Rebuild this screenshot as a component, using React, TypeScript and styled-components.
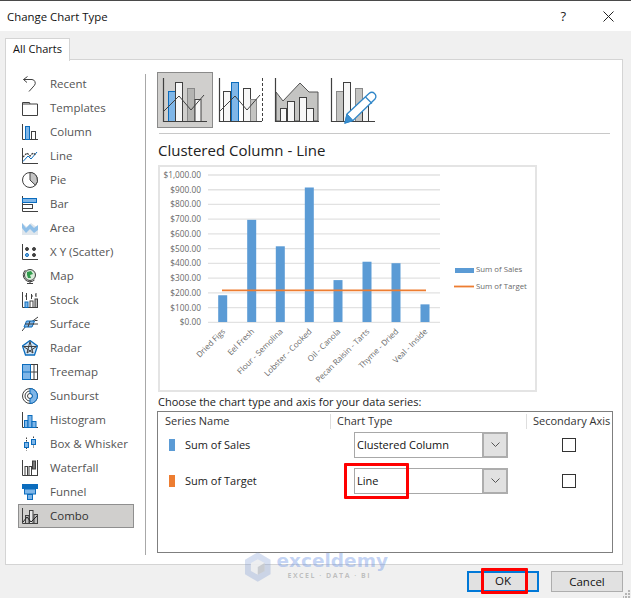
import React from "react";
import styled, { createGlobalStyle } from "styled-components";

const Global = createGlobalStyle`
  html, body { margin: 0; padding: 0; background: #f0f0f0; }
  body { font-family: "Open Sans", "Noto Sans", "Liberation Sans", sans-serif; }
  * { box-sizing: border-box; }
`;
const Dialog = styled.div`
  position: relative; width: 631px; height: 598px; overflow: hidden; background: #f0f0f0;
  display: flex; flex-direction: column; font-size: 11px; color: #1a1a1a;
`;
const TitleBar = styled.div`
  height: 31px; flex: none; background: #fff; border-top: 1px solid #4a4a4a;
  display: flex; align-items: center; padding: 0 17px 0 7px; font-size: 11.4px; color: #111;
`;
const Title = styled.div`flex: 1;`;
const Help = styled.div`margin-right: 37px; font-size: 13px; color: #222;`;
const TabStrip = styled.div`
  height: 29px; flex: none; padding: 7px 0 0 5px; display: flex;
`;
const Tab = styled.div`
  width: 65px; height: 23px; background: #fff; border: 1px solid #d4d4d4; border-bottom: none;
  display: flex; align-items: center; justify-content: center; position: relative; z-index: 1;
  font-size: 11px; color: #111; padding-bottom: 3px;
`;
const Panel = styled.div`
  margin: -1px 8px 0 5px; height: 506px; flex: none; background: #fff; border: 1px solid #d4d4d4;
  display: flex; padding: 12px 12px 9px 12px;
`;
const Sidebar = styled.div`
  width: 128px; flex: none; border-right: 1px solid #a8a8a8; padding-right: 11px; margin-top: 2px;
  display: flex; flex-direction: column;
`;
const SideList = styled.div`margin-top: -2px; display: flex; flex-direction: column;`;
const SideItem = styled.div<{ $active?: boolean }>`
  height: 24px; display: flex; align-items: center; gap: 12px; padding-left: 3px; flex: none;
  font-size: 11.5px;
  color: ${(p) => (p.$active ? "#333" : "#555")};
  background: ${(p) => (p.$active ? "#d0cfcd" : "transparent")};
  border: 1px solid ${(p) => (p.$active ? "#8f8f8f" : "transparent")};
  svg { flex: none; }
  span { position: relative; top: -1px; }
`;
const Main = styled.div`
  flex: 1; padding-left: 11px; display: flex; flex-direction: column; min-width: 0;
`;
const TypeRow = styled.div`display: flex; height: 56px; flex: none;`;
const TypeButton = styled.div<{ $active?: boolean }>`
  width: 56px; height: 56px; flex: none;
  background: ${(p) => (p.$active ? "#d0cfcd" : "transparent")};
  border: 1px solid ${(p) => (p.$active ? "#8a8a8a" : "transparent")};
  svg { display: block; margin: -1px; }
`;
const Rule = styled.div`height: 1px; background: #c8c8c8; margin: 5px 0 0 2px; flex: none;`;
const ChartTitle = styled.div`
  font-size: 15px; line-height: 20px; margin: 6px 0 5px 1px; color: #222; flex: none;
`;
const ChartBox = styled.div`
  width: 379px; height: 227px; margin-left: 1px; border: 2px solid #e4e4e4; flex: none; background: #fff;
  svg { display: block; margin: -2px; }
`;
const ChooseLabel = styled.div`
  font-size: 11px; line-height: 16px; height: 19px; padding-top: 2px; margin-left: 1px; color: #222; flex: none;
`;
const SeriesTable = styled.div`
  width: 456px; height: 142px; border: 1px solid #7f7f7f; flex: none; display: flex; flex-direction: column;
`;
const HeaderRow = styled.div`
  display: grid; grid-template-columns: 172px 196px 1fr; height: 19px;
`;
const HeaderCell = styled.div<{ $first?: boolean }>`
  padding-left: ${(p) => (p.$first ? "7px" : "6px")}; padding-bottom: 2px;
  height: 15px; margin-top: 2px; white-space: nowrap; color: #333;
  border-left: ${(p) => (p.$first ? "none" : "1px solid #dedede")};
  display: flex; align-items: center;
`;
const SeriesRow = styled.div`
  display: grid; grid-template-columns: 196px 177px 1fr; height: 26px; align-items: center;
  margin-top: 1px; flex: none;
  & + & { margin-top: 10px; }
`;
const SeriesName = styled.div`display: flex; align-items: center; gap: 10px; padding-left: 11px; color: #222;`;
const NameText = styled.span`position: relative; top: -1px;`;
const Swatch = styled.div<{ $color: string }>`
  width: 6px; height: 12px; background: ${(p) => p.$color}; flex: none;
`;
const Select = styled.div`
  position: relative; width: 154px; height: 26px; border: 1px solid #a8a8a8; display: flex; background: #fff;
`;
const SelectText = styled.div`flex: 1; padding-left: 2px; line-height: 24px; color: #111;`;
const SelectBtn = styled.div`
  width: 26px; margin: -1px -1px -1px 0; background: #e1e1e1; border: 2px solid #adadad;
  display: flex; align-items: center; justify-content: center;
`;
const CheckCell = styled.div`display: flex; justify-content: center; padding-right: 6px;`;
const Check = styled.div`width: 14px; height: 14px; border: 1px solid #333; background: #fff;`;
const RedBox = styled.div`
  position: absolute; left: -11px; top: -6px; width: 65px; height: 36px; border: 3px solid #f00; border-radius: 1px;
`;
const Footer = styled.div`
  flex: 1; display: flex; justify-content: flex-end; gap: 12px; padding: 6px 8px 0 0;
`;
const Button = styled.div<{ $primary?: boolean }>`
  position: relative; width: 72px; height: 21px; background: #e1e1e1;
  border: ${(p) => (p.$primary ? "2px solid #0078d7" : "1px solid #adadad")};
  display: flex; align-items: center; justify-content: center; color: #111; font-size: 11.5px;
  padding-bottom: ${(p) => (p.$primary ? "2px" : "1px")};
`;
const RedOk = styled.div`
  position: absolute; left: 12px; top: -5px; width: 47px; height: 26px; border: 3px solid #f00; border-radius: 1px;
`;
const Grip = styled.svg`position: absolute; right: 0; bottom: 0;`;
const Watermark = styled.div`
  position: absolute; left: 244px; top: 551px; width: 144px; height: 32px; display: flex; gap: 5px; pointer-events: none;
`;
const WmText = styled.div`display: flex; flex-direction: column;`;
const WmName = styled.div`
  font-family: "DejaVu Sans", sans-serif; font-weight: 700; font-size: 18.5px; line-height: 20px;
  color: rgba(110, 150, 230, 0.42);
`;
const WmSub = styled.div`
  font-family: "Open Sans", sans-serif; font-weight: 700; font-size: 7px; line-height: 10px; letter-spacing: 1.5px;
  margin-left: 11px; color: rgba(120, 120, 120, 0.42); white-space: nowrap;
`;

const S = "#404040";
const B = "#0b6cbd";
const L = "#7fb6e8";
const base = { width: 16, height: 16, viewBox: "0 0 16 16", fill: "none" as const, stroke: S, strokeWidth: 1 };

const icons: Record<string, React.ReactNode> = {
  Recent: <svg {...base}><path d="M5.5.5 1.500 3.500l3.500 3M1.500 3.500h8.500a3.600 3.600 0 0 1 2.500 5.800L7 15.500" /></svg>,
  Templates: <svg {...base}><path d="M.5 15.500v-13h7l.5 1.500h7.500v11.500zM.5 4h7.500" /></svg>,
  Column: <svg {...base}><path d="M.5 0v15.500H16" /><rect x="3.500" y="2.500" width="4" height="13" fill={L} stroke={B} /><rect x="9.500" y="7.500" width="4" height="8" /></svg>,
  Line: <svg {...base}><path d="M.5 0v15.500H16" /><path d="M1 13.500 6 8l3 3 6-7" stroke={B} /><path d="M1 9l4-4 3 3 3-3 3 2" strokeDasharray="2 1" strokeWidth="1.300" /></svg>,
  Pie: <svg {...base}><circle cx="8" cy="8" r="7.500" /><path d="M8 8V.5A7.500 7.500 0 0 1 13.400 13.200z" fill="#c4c4c4" /></svg>,
  Bar: <svg {...base}><path d="M.5 0v15.500H16" /><rect x=".5" y="2.500" width="14" height="4" fill={L} stroke={B} /><rect x=".5" y="8.500" width="10" height="4" /></svg>,
  Area: <svg {...base} stroke="none"><path d="M0 3l5 4 4-4 7 5v7H0z" fill="#dfe6ec" /><path d="M0 3l4 5 4-4 4 4 4-3v5l-4 3-4-4-4 4-4-5z" fill="#8fbfe8" /></svg>,
  Scatter: <svg {...base}><path d="M.5 0v15.500H16" /><circle cx="5" cy="5" r="1.500" fill={S} /><circle cx="12" cy="5" r="1.500" fill={S} /><circle cx="5" cy="11" r="1.500" fill={L} stroke={B} /><circle cx="12" cy="11" r="1.500" fill={S} /></svg>,
  Map: <svg {...base}><circle cx="8" cy="7" r="5.500" fill="#d9ecd9" /><path d="M5 4l4-1 2 3-3 1 1 3-3 0-1-3z" fill="#2e9a4a" stroke="none" /><path d="M3.500 2A6.500 6.500 0 0 0 12.500 12M8 13.500V15M5 15.500h6" /></svg>,
  Stock: <svg {...base}><path d="M.5 0v15.500H16" /><rect x="3" y="10" width="3" height="5.500" fill={L} stroke={B} /><rect x="8" y="9" width="3" height="6.500" /><rect x="13" y="7" width="2.500" height="8.500" fill="#bbb" /><path d="M4.500 1v7M9.500 2v5M14 1v4" /><path d="M3 4h1.500M9.500 4h1.500M13 3h1" /></svg>,
  Surface: <svg {...base}><path d="M0 15l4-5 12-9" /><path d="M4.500 5h8L10 11H2z" fill={L} stroke={B} /><path d="M8 5 6 11M3 8h9M11 8h5M12.500 4.500h3" /></svg>,
  Radar: <svg {...base}><path d="M8 .5 15.500 6 12.500 15H3.500L.5 6z" fill="#cfe4f6" stroke={B} strokeWidth="1.300" /><path d="M8 1.500 11 13 1.500 6.500H14.500L5 13z" /></svg>,
  Treemap: <svg {...base}><rect x=".5" y=".5" width="15" height="15" /><rect x=".5" y=".5" width="8" height="15" fill={L} stroke={B} /><path d="M.5 8h8" stroke={B} /><path d="M12 .5V15.500M8.500 8h7" /></svg>,
  Sunburst: <svg {...base}><circle cx="8" cy="8" r="7.500" /><circle cx="8" cy="8" r="5" /><circle cx="8" cy="8" r="2.500" /><path d="M8 .5A7.500 7.500 0 0 1 8 15.500V10.500A2.500 2.500 0 0 0 8 5.500z" fill={L} stroke={B} /></svg>,
  Histogram: <svg {...base}><path d="M.5 0v15.500H16" /><rect x="2.500" y="8.500" width="3.500" height="7" fill={L} stroke={B} /><rect x="6" y="3.500" width="4" height="12" fill={L} stroke={B} /><rect x="10" y="9.500" width="4" height="6" fill={L} stroke={B} /></svg>,
  Box: <svg {...base}><path d="M4.500 1.500v13M11.500 .5v11" strokeDasharray="1.500 1" /><rect x="2.500" y="6.500" width="4" height="5" fill={L} stroke={B} /><rect x="9.500" y="3.500" width="4" height="5" fill={L} stroke={B} /></svg>,
  Waterfall: <svg {...base}><path d="M.5 0v15.500H16M15.500 0v15" /><rect x="3" y="6.500" width="2.500" height="9" /><rect x="7" y="6.500" width="2.500" height="9" /><rect x="10.500" y="1" width="3" height="8" fill="#777" /></svg>,
  Funnel: <svg {...base} stroke={B}><rect x=".5" y=".5" width="15" height="4" fill={B} /><rect x="2.500" y="5" width="11" height="5" fill={L} /><rect x="5.500" y="10.500" width="5" height="5" fill={L} /></svg>,
  Combo: <svg {...base}><path d="M.5 0v15.500H16" /><rect x="3.500" y="7.500" width="3.500" height="8" fill="#bdbdbd" /><rect x="7.500" y="2.500" width="3.500" height="13" fill="#e8e8e8" /><rect x="12" y="6.500" width="3.500" height="9" fill="#bdbdbd" /><path d="M1 14l4-5 4 5 6-6" stroke="#222" /></svg>,
};

const side: [string, string][] = [
  ["Recent", "Recent"], ["Templates", "Templates"], ["Column", "Column"], ["Line", "Line"], ["Pie", "Pie"],
  ["Bar", "Bar"], ["Area", "Area"], ["Scatter", "X Y (Scatter)"], ["Map", "Map"], ["Stock", "Stock"],
  ["Surface", "Surface"], ["Radar", "Radar"], ["Treemap", "Treemap"], ["Sunburst", "Sunburst"], ["Histogram", "Histogram"],
  ["Box", "Box & Whisker"], ["Waterfall", "Waterfall"], ["Funnel", "Funnel"], ["Combo", "Combo"],
];

const TypeSvg = ({ x, children }: { x: number; children: React.ReactNode }) => (
  <svg width="56" height="56" viewBox={`${x} 72 56 56`} fill="none" stroke={S} strokeWidth="1">{children}</svg>
);
const Gray = "#c4c4c2";
const White = "#f7f7f7";

const ChartType1 = () => (
  <TypeSvg x={157}>
    <rect x="168.500" y="91.500" width="7" height="30" fill={L} stroke={B} />
    <rect x="175.500" y="82.500" width="7" height="39" fill={White} />
    <rect x="187.500" y="88.500" width="7" height="33" fill="#b4b4b2" stroke="#888" />
    <rect x="195" y="99.500" width="6" height="22" fill={White} />
    <path d="M163.500 78v43.500H207" strokeWidth="1.200" />
    <path d="M164 111l15-15 12 14 13-15" />
  </TypeSvg>
);
const ChartType2 = () => (
  <TypeSvg x={213}>
    <rect x="223.500" y="91.500" width="7" height="30" fill={White} />
    <rect x="231.500" y="82.500" width="7" height="39" fill={L} stroke={B} />
    <rect x="243.500" y="88.500" width="7" height="33" fill={White} />
    <rect x="250.500" y="99.500" width="6" height="22" fill={Gray} stroke="#888" />
    <path d="M219.500 78v43.500H262" strokeWidth="1.200" />
    <path d="M262.500 78v43" strokeDasharray="3 2" />
    <path d="M220 111l15-15 12 14 13-15" />
  </TypeSvg>
);
const ChartType3 = () => (
  <TypeSvg x={269}>
    <path d="M276 92l7 9 17-18 9 9h9v29h-42z" fill={Gray} stroke="#555" />
    <rect x="280.500" y="108.500" width="6" height="13" fill={White} />
    <rect x="287.500" y="101.500" width="7" height="20" fill={White} />
    <rect x="299.500" y="97.500" width="7" height="24" fill={White} />
    <rect x="306.500" y="108.500" width="7" height="13" fill={White} />
    <path d="M275.500 78v43.500H319" strokeWidth="1.200" />
  </TypeSvg>
);
const ChartType4 = () => (
  <TypeSvg x={325}>
    <rect x="336.500" y="91.500" width="7" height="30" fill={Gray} stroke="#888" />
    <rect x="343.500" y="82.500" width="7" height="39" fill={White} />
    <rect x="355.500" y="88.500" width="7" height="33" fill={Gray} stroke="#888" />
    <rect x="362.500" y="100.500" width="6" height="21" fill={White} />
    <path d="M331.500 78v43.500H375" strokeWidth="1.200" />
    <path d="M347 114 369 93.500q3-2.500 5.500 0t.5 5.500L353 120.500l-8 2.500z" fill="#fff" stroke="#2f86c8" strokeWidth="1.300" />
    <path d="M347 114l6 6.500-8 2.500z" fill="#3a8fd0" stroke="#2f86c8" />
    <path d="M365.500 97l6.500 6.500" stroke="#2f86c8" strokeWidth="1.300" />
  </TypeSvg>
);

const yLabels = ["$1,000.00", "$900.00", "$800.00", "$700.00", "$600.00", "$500.00", "$400.00", "$300.00", "$200.00", "$100.00", "$0.00"];
const data: [string, number, number][] = [
  ["Dried Figs", 222.7, 182], ["Eel Fresh", 251.7, 695], ["Flour - Semolina", 280.3, 515], ["Lobster - Cooked", 309.3, 915],
  ["Oil - Canola", 338, 285], ["Pecan Raisin - Tarts", 367, 410], ["Thyme - Dried", 396, 400], ["Veal - Inside", 425, 120],
];
const ct = { fontFamily: "'Open Sans', sans-serif", fontSize: 8, fill: "#6a6a6a", stroke: "none" };

const Chart = () => (
  <svg width="379" height="227" viewBox="158 165 379 227">
    {yLabels.map((t, i) => {
      const y = 175 + i * 14.73;
      return (
        <g key={t}>
          <line x1="208" x2="440" y1={y} y2={y} stroke="#e2e2e2" strokeWidth="1.300" />
          <text x="201" y={y + 3} textAnchor="end" {...ct} fontSize="8.300">{t}</text>
        </g>
      );
    })}
    {data.map(([name, cx, v]) => (
      <g key={name}>
        <rect x={cx - 4.5} y={322 - v * 0.147} width="9" height={v * 0.147} fill="#5b9bd5" />
        <text transform={`translate(${cx + 3} 332) rotate(-45)`} textAnchor="end" {...ct}>{name}</text>
      </g>
    ))}
    <line x1="222" x2="426" y1="290.300" y2="290.300" stroke="#ed7d31" strokeWidth="1.800" />
    <rect x="455" y="268" width="19" height="5" fill="#5b9bd5" />
    <text x="476" y="272" {...ct} fontSize="7.800">Sum of Sales</text>
    <line x1="454" x2="474" y1="286.500" y2="286.500" stroke="#ed7d31" strokeWidth="1.800" />
    <text x="476" y="289" {...ct} fontSize="7.800">Sum of Target</text>
  </svg>
);

const Chevron = () => (
  <svg width="9" height="6" viewBox="0 0 9 6" fill="none" stroke="#555" strokeWidth="1"><path d="M.5 .5l4 4 4-4" /></svg>
);

export default function App() {
  return (
    <Dialog>
      <Global />
      <TitleBar>
        <Title>Change Chart Type</Title>
        <Help>?</Help>
        <svg width="11" height="11" viewBox="0 0 11 11" stroke="#222" strokeWidth="1"><path d="M.5 .5l10 10M10.500 .5l-10 10" /></svg>
      </TitleBar>
      <TabStrip><Tab>All Charts</Tab></TabStrip>
      <Panel>
        <Sidebar>
          <SideList>
            {side.map(([k, label]) => (
              <SideItem key={k} $active={k === "Combo"}>{icons[k]}<span>{label}</span></SideItem>
            ))}
          </SideList>
        </Sidebar>
        <Main>
          <TypeRow>
            <TypeButton $active><ChartType1 /></TypeButton>
            <TypeButton><ChartType2 /></TypeButton>
            <TypeButton><ChartType3 /></TypeButton>
            <TypeButton><ChartType4 /></TypeButton>
          </TypeRow>
          <Rule />
          <ChartTitle>Clustered Column - Line</ChartTitle>
          <ChartBox><Chart /></ChartBox>
          <ChooseLabel>Choose the chart type and axis for your data series:</ChooseLabel>
          <SeriesTable>
            <HeaderRow>
              <HeaderCell $first>Series Name</HeaderCell>
              <HeaderCell>Chart Type</HeaderCell>
              <HeaderCell>Secondary Axis</HeaderCell>
            </HeaderRow>
            <SeriesRow>
              <SeriesName><Swatch $color="#5b9bd5" /><NameText>Sum of Sales</NameText></SeriesName>
              <Select><SelectText>Clustered Column</SelectText><SelectBtn><Chevron /></SelectBtn></Select>
              <CheckCell><Check /></CheckCell>
            </SeriesRow>
            <SeriesRow>
              <SeriesName><Swatch $color="#ed7d31" /><NameText>Sum of Target</NameText></SeriesName>
              <Select>
                <SelectText>Line</SelectText><SelectBtn><Chevron /></SelectBtn>
                <RedBox />
              </Select>
              <CheckCell><Check /></CheckCell>
            </SeriesRow>
          </SeriesTable>
        </Main>
      </Panel>
      <Footer>
        <Button $primary>OK<RedOk /></Button>
        <Button>Cancel</Button>
      </Footer>
      <Watermark>
        <svg width="28" height="32" viewBox="0 0 28 32">
          <path d="M14 1 27 8.500v15L14 31 1 23.500v-15z" fill="rgba(120,150,210,.3)" />
          <path d="M14 8 21 12v8l-7 4-7-4v-8z" fill="rgba(240,240,240,.9)" />
          <path d="M14 16l7-4v8l-7 4z" fill="rgba(120,130,140,.3)" />
        </svg>
        <WmText>
          <WmName>exceldemy</WmName>
          <WmSub>EXCEL · DATA · BI</WmSub>
        </WmText>
      </Watermark>
      <Grip width="8" height="8" viewBox="0 0 8 8" fill="#b5b5b5">
        <rect x="5" y="0" width="2" height="2" /><rect x="2" y="3" width="2" height="2" /><rect x="5" y="3" width="2" height="2" />
        <rect x="-1" y="6" width="2" height="2" /><rect x="2" y="6" width="2" height="2" /><rect x="5" y="6" width="2" height="2" />
      </Grip>
    </Dialog>
  );
}
